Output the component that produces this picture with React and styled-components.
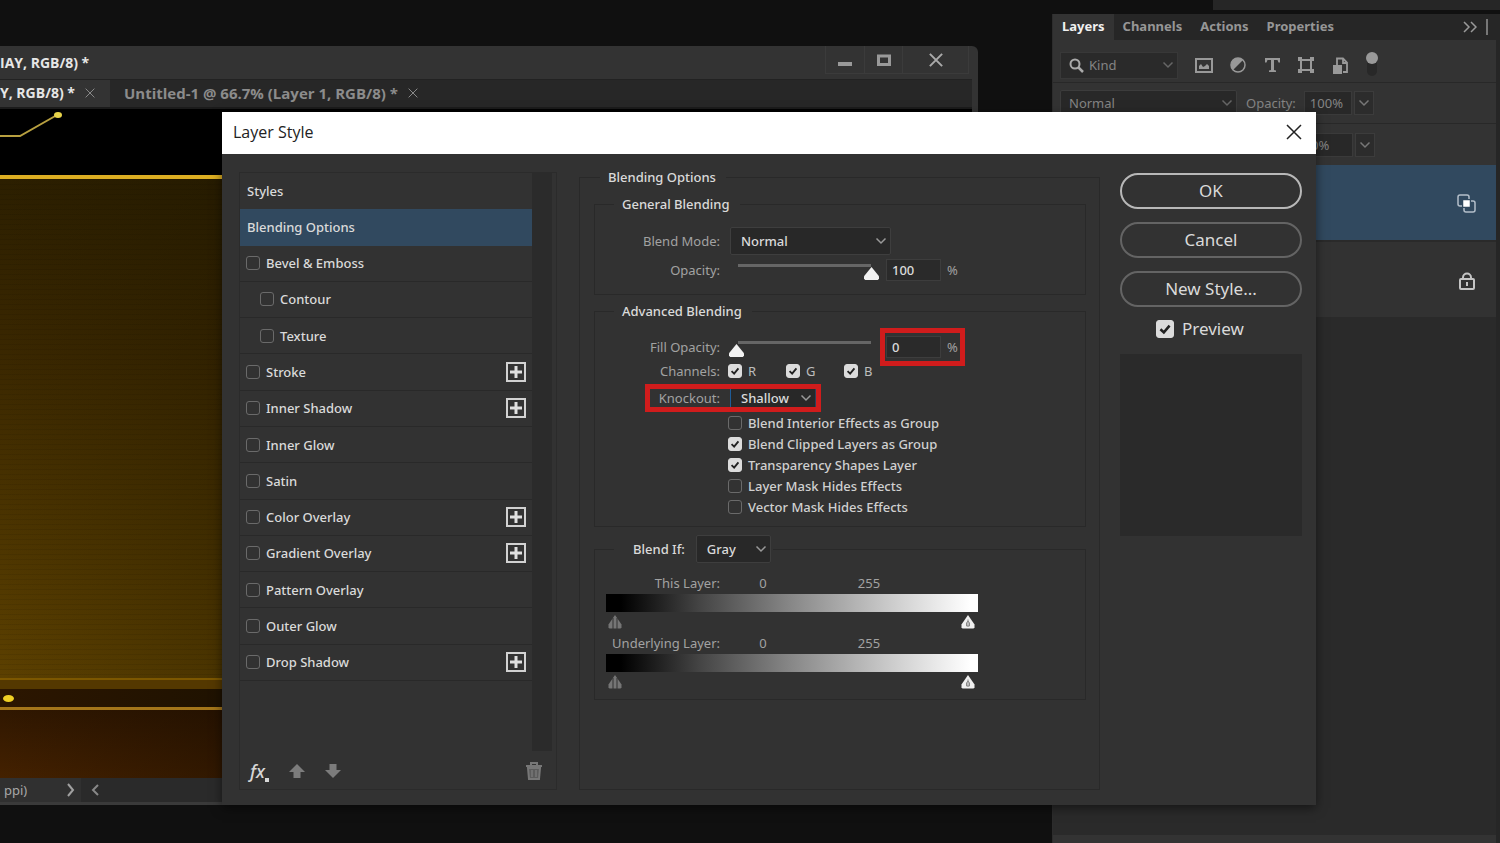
import React from 'react';
import styled, { createGlobalStyle, css } from 'styled-components';

const GlobalStyle = createGlobalStyle`
  *, *::before, *::after { box-sizing: border-box; }
  body {
    margin: 0;
    background: #101010;
    color: #dadada;
    font: 13px/16px "Noto Sans", "Open Sans", sans-serif;
  }
  button, input, select { font: inherit; color: inherit; margin: 0; }
  button { background: none; border: 0; padding: 0; }
`;

const chevron = (color) =>
  `url("data:image/svg+xml,%3Csvg xmlns='http://www.w3.org/2000/svg' width='12' height='8' viewBox='0 0 12 8'%3E%3Cpath d='M1.5 1.5 6 6l4.500-4.500' fill='none' stroke='%23${color}' stroke-width='1.500'/%3E%3C/svg%3E")`;
const CHECK =
  "url(\"data:image/svg+xml,%3Csvg xmlns='http://www.w3.org/2000/svg' viewBox='0 0 14 14'%3E%3Cpath d='M3 7.200 6 10l5-6' fill='none' stroke='%23222' stroke-width='2.200'/%3E%3C/svg%3E\")";

const Desktop = styled.main`
  position: relative;
  display: flex;
  min-height: max(100vh, 820px);
  overflow: hidden;
  background: #101010;
`;

/* Document window */

const Workspace = styled.div`
  flex: 1;
  min-width: 0;
  display: flex;
  padding: 46px 74px 38px 0;
`;

const DocWindow = styled.section`
  flex: 1;
  min-width: 0;
  display: flex;
  flex-direction: column;
  padding-right: 6px;
  border-radius: 0 6px 0 0;
  background: #333;
`;

const DocTitleBar = styled.header`
  display: flex;
  align-items: stretch;
  justify-content: space-between;
  height: 33px;
`;

const DocTitle = styled.h1`
  margin: 0;
  font-family: "Open Sans", sans-serif;
  font-size: 14px;
  line-height: 34px;
  font-weight: 700;
  color: #e6e6e6;
`;

const WindowButtons = styled.div`
  display: flex;
  height: 28px;
  margin-right: 3px;
  border: 1px solid #3b3b3b;
  border-width: 0 1px 1px;
`;

const WindowButton = styled.button`
  display: grid;
  place-items: center;
  width: ${(p) => (p.$wide ? 66 : 38)}px;
  & + & { border-left: 1px solid #3b3b3b; }
`;

const TabStrip = styled.div`
  display: flex;
  height: 30px;
  border-top: 1px solid #222;
  border-bottom: 2px solid #1b1b1b;
  background: #272727;
`;

const DocTab = styled.div`
  display: flex;
  align-items: center;
  gap: 10px;
  padding: 0 15px 2px ${(p) => (p.$active ? 0 : 14)}px;
  background: ${(p) => (p.$active ? '#333' : 'transparent')};
  color: ${(p) => (p.$active ? '#e6e6e6' : '#8c8c8c')};
  font-family: "Open Sans", sans-serif;
  font-weight: 700;
  font-size: ${(p) => (p.$active ? 14 : 15)}px;
  button { display: flex; }
`;

const Canvas = styled.div`
  flex: 1;
  display: flex;
  flex-direction: column;
  background: #000;
`;

const ArtTop = styled.div`
  height: 66px;
  svg { display: block; }
`;

const ArtLine = styled.div`
  height: ${(p) => p.$size}px;
  background: ${(p) => p.$color};
`;

const ArtField = styled.div`
  flex: 1;
  background:
    repeating-linear-gradient(rgba(0, 0, 0, 0.08) 0 1px, transparent 1px 5px),
    linear-gradient(90deg, transparent, rgba(20, 16, 0, 0.25) 222px),
    linear-gradient(#2c1f00, #3a2700 35%, #4e3600 75%, #5c4000);
`;

const ArtBand = styled.div`
  display: flex;
  align-items: center;
  height: 18px;
  padding-left: 3px;
  background: linear-gradient(90deg, #2c1600, #1f1200 222px);
`;

const ArtDot = styled.span`
  width: 11px;
  height: 7px;
  border-radius: 50%;
  background: #f0d024;
`;

const ArtGround = styled.div`
  height: 68px;
  background:
    linear-gradient(90deg, transparent, rgba(20, 10, 0, 0.4) 222px),
    linear-gradient(#301700, #442100);
`;

const StatusBar = styled.footer`
  display: flex;
  align-items: center;
  height: 27px;
  border-bottom: 3px solid #3a3a3a;
  background: #2a2a2a;
  color: #a8a8a8;
`;

const StatusInfo = styled.div`
  display: flex;
  align-items: center;
  justify-content: space-between;
  align-self: stretch;
  width: 81px;
  padding: 0 6px 0 4px;
  background: #303030;
`;

const StatusScroll = styled.button`
  display: flex;
  padding-left: 10px;
`;

/* Layers dock */

const Dock = styled.aside`
  width: 448px;
  display: flex;
  flex-direction: column;
`;

const DockTop = styled.div`
  height: 10px;
  margin-left: 161px;
  background: #262626;
`;

const LayersPanel = styled.section`
  flex: 1;
  display: flex;
  flex-direction: column;
  margin-top: 4px;
  border-left: 1px solid #2c2c2c;
  border-right: 4px solid #262626;
  background: #2a2a2a;
`;

const PanelTabs = styled.nav`
  display: flex;
  align-items: center;
  height: 26px;
  background: #262626;
`;

const PanelTab = styled.button`
  height: 26px;
  padding: 0 9px 2px;
  font-weight: 700;
  color: ${(p) => (p.$active ? '#f0f0f0' : '#969696')};
  background: ${(p) => (p.$active ? '#333' : 'transparent')};
`;

const PanelTabEnd = styled.div`
  display: flex;
  align-items: center;
  gap: 9px;
  margin-left: auto;
  padding-right: 8px;
`;

const PanelRow = styled.div`
  display: flex;
  align-items: center;
  height: ${(p) => p.$size}px;
  padding: ${(p) => (p.$filter ? 8 : 0)}px 8px 0 7px;
  border-bottom: ${(p) => (p.$line ? 1 : 0)}px solid #282828;
  background: #333;
  color: #848484;
`;

const KindBox = styled.label`
  display: flex;
  align-items: center;
  gap: 5px;
  width: 118px;
  height: 27px;
  margin-right: 16px;
  padding-left: 8px;
  border: 1px solid #383838;
  background: #2a2a2a;
`;

const FilterButtons = styled.div`
  display: flex;
  align-items: center;
  gap: 14px;
  button { display: flex; justify-content: center; width: 20px; }
  button:last-child { width: 16px; }
`;

const PanelSelect = styled.select`
  appearance: none;
  width: 177px;
  height: 26px;
  padding: 0 8px;
  margin-right: 9px;
  border: 1px solid #3c3c3c;
  border-radius: 2px;
  background: #282828 ${chevron('666')} no-repeat right 3px center;
  ${(p) => p.$bare && 'flex: 1; min-width: 0; border: 0; padding: 0; margin: 0; background-color: transparent;'}
`;

const PanelValue = styled.input`
  width: 48px;
  height: 24px;
  margin-left: ${(p) => (p.$push ? 245 : 8)}px;
  padding: 0 5px;
  border: 1px solid #3a3a3a;
  background: #282828;
`;

const PanelArrow = styled.button`
  width: 20px;
  height: 24px;
  margin-left: 2px;
  border: 1px solid #3c3c3c;
  background: #2c2c2c ${chevron('777')} no-repeat center;
`;

const LayerItem = styled.div`
  display: flex;
  align-items: center;
  justify-content: flex-end;
  height: 77px;
  padding: 2px 20px 0 0;
  border-bottom: 2px solid #2a2a2a;
  background: ${(p) => (p.$selected ? '#31495f' : '#323232')};
`;

const PanelFooter = styled.div`
  height: 8px;
  margin-top: auto;
  background: #333;
`;

/* Layer Style dialog */

const Dialog = styled.section`
  position: absolute;
  top: 112px;
  left: 222px;
  right: 184px;
  background: #323232;
  box-shadow: 0 3px 10px rgba(0, 0, 0, 0.5);
`;

const DialogTitle = styled.header`
  display: flex;
  align-items: center;
  justify-content: space-between;
  height: 42px;
  padding: 0 14px 2px 11px;
  background: #fff;
  color: #222;
  h2 {
    margin: 0;
    font: 400 16px/20px "Open Sans", sans-serif;
  }
  button { display: flex; }
`;

const DialogBody = styled.div`
  display: flex;
  min-height: 651px;
  padding: 15px 14px 15px 17px;
`;

const StylesPanel = styled.div`
  width: 318px;
  margin: 3px 22px 0 0;
  display: flex;
  flex-direction: column;
  border: 1px solid #2b2b2b;
  font-weight: 500;
`;

const StylesScroll = styled.div`
  flex: 1;
  display: flex;
  justify-content: space-between;
`;

const StyleList = styled.ul`
  flex: 1;
  display: grid;
  grid-auto-rows: 1fr;
  height: 508px;
  margin: 0;
  padding: 0;
  list-style: none;
`;

const ScrollTrack = styled.div`
  width: 20px;
  margin-right: 4px;
  background: #2b2b2b;
`;

const StyleRow = styled.li`
  display: flex;
  align-items: center;
  justify-content: space-between;
  padding: 0 6px 0 ${(p) => (p.$nested ? 20 : 6)}px;
  border-bottom: 1px solid ${(p) => (p.$plain ? 'transparent' : '#292929')};
  background: ${(p) => (p.$selected ? '#31495f' : 'transparent')};
`;

const StyleLink = styled.button`
  padding: 0 1px;
`;

const CheckLabel = styled.label`
  display: inline-flex;
  align-items: center;
  gap: ${(p) => (p.$large ? 8 : 6)}px;
  ${(p) => p.$large && css`
    align-self: flex-start;
    margin: 0 0 3px 36px;
    font-size: 17px;
  `}
`;

const Checkbox = styled.input.attrs({ type: 'checkbox' })`
  appearance: none;
  flex: none;
  width: ${(p) => (p.$large ? 18 : 14)}px;
  height: ${(p) => (p.$large ? 18 : 14)}px;
  border: 1px solid #6a6a6a;
  border-radius: 3px;
  &:checked {
    border-color: #dcdcdc;
    background: #dcdcdc ${CHECK} center / 100% no-repeat;
  }
`;

const AddButton = styled.button`
  display: grid;
  place-items: center;
  width: 20px;
  height: 20px;
  border: 2px solid #d2d2d2;
`;

const StylesFooter = styled.div`
  display: flex;
  align-items: center;
  gap: 20px;
  height: 38px;
  padding: 2px 14px 0 10px;
  color: #808080;
  button { display: flex; }
`;

const FxButton = styled.button`
  align-items: flex-end;
  color: #d6d6d6;
  font-size: 18px;
  line-height: 22px;
  font-style: italic;
`;

const TrashButton = styled.button`
  margin-left: auto;
`;

const Group = styled.fieldset`
  min-width: 0;
  margin: 0 0 8px;
  padding: ${(p) => p.$pad};
  border: 1px solid #292929;
  color: #a2a2a2;
`;

const OptionsGroup = styled(Group)`
  flex: 1;
  margin: 0 20px 0 0;
`;

const Legend = styled.legend`
  display: flex;
  align-items: center;
  gap: 11px;
  margin-left: ${(p) => (p.$outer ? 6 : 19)}px;
  padding: 0 ${(p) => (p.$tight ? 2 : 10)}px 0 ${(p) => (p.$tight ? 19 : 8)}px;
  color: #dadada;
  font-weight: 500;
`;

const FormRow = styled.div`
  position: relative;
  display: grid;
  grid-template-columns: 125px 1fr;
  column-gap: 8px;
  align-items: center;
  height: ${(p) => p.$size}px;
`;

const FieldLabel = styled.label`
  text-align: right;
`;

const Controls = styled.div`
  display: flex;
  align-items: center;
  padding-left: ${(p) => (p.$flush ? 1 : 2)}px;
`;

const Select = styled.select`
  appearance: none;
  width: ${(p) => p.$width}px;
  height: ${(p) => (p.$focus ? 22 : 28)}px;
  padding: 0 10px;
  border: 1px solid #3e3e3e;
  border-radius: 2px;
  background: #282828 ${chevron('999')} no-repeat right 3px center;
  color: #dadada;
  font-weight: 500;
  ${(p) => p.$focus && 'border-color: #29425c; border-left-color: #1f5c98;'}
`;

const Slider = styled.input.attrs({ type: 'range' })`
  appearance: none;
  width: 150px;
  height: 22px;
  margin-right: 7px;
  background: linear-gradient(#666, #666) no-repeat 9px 5px / 133px 3px;
  &::-webkit-slider-runnable-track { height: 22px; background: none; }
  &::-webkit-slider-thumb {
    appearance: none;
    width: 15px;
    height: 13px;
    margin-top: 8px;
    background: #f2f2f2;
    clip-path: polygon(50% 0, 100% 72%, 100% 90%, 92% 100%, 8% 100%, 0 90%, 0 72%);
  }
`;

const NumberGroup = styled.div`
  position: relative;
  display: flex;
  align-items: center;
  gap: 6px;
`;

const NumberField = styled.input`
  width: 55px;
  height: 22px;
  padding: 0 5px;
  border: 1px solid #3d3d3d;
  background: #2a2a2a;
  color: #dadada;
  font-weight: 500;
`;

const Highlight = styled.span`
  position: absolute;
  border: 5px solid #d01c1c;
  pointer-events: none;
  ${(p) => (p.$row ? 'inset: 0 auto 0 50px; width: 176px;' : 'inset: -8px -7px -8px -6px;')}
`;

const Channels = styled.div`
  display: flex;
  color: #bdbdbd;
  label { width: 58px; }
`;

const CheckList = styled.div`
  display: grid;
  grid-auto-rows: 21px;
  padding-left: 133px;
  color: #d0d0d0;
  font-weight: 500;
`;

const RangeBlock = styled.div`
  width: 372px;
  margin-left: 11px;
`;

const RangeHead = styled.div`
  display: grid;
  grid-template-columns: 114px 86px 126px;
  align-items: center;
  height: 22px;
  text-align: center;
  span:first-child { text-align: right; }
`;

const RangeBar = styled.div`
  height: 18px;
  background: linear-gradient(90deg, #000 4%, #444 25%, #888 50%, #d4d4d4 80%, #fff 98%);
`;

const RangeMarks = styled.div`
  display: flex;
  justify-content: space-between;
  height: 20px;
  padding: 3px 3px 0 2px;
`;

const Actions = styled.div`
  width: 182px;
  margin-top: 4px;
  display: flex;
  flex-direction: column;
  align-items: center;
  gap: 13px;
`;

const PillButton = styled.button`
  width: 100%;
  height: 36px;
  border: 2px solid ${(p) => (p.$primary ? '#b8b8b8' : '#646464')};
  border-radius: 18px;
  font-size: 17px;
  color: #dadada;
`;

const PreviewBox = styled.div`
  align-self: stretch;
  height: 182px;
  background: #2a2a2a;
`;

const Cross = ({ size, color, weight = 1 }) => (
  <svg width={size} height={size} viewBox="0 0 16 16" fill="none" stroke={color} strokeWidth={(weight * 16) / size}>
    <path d="M1 1 15 15M15 1 1 15" />
  </svg>
);

const Mark = ({ light }) => (
  <svg width="14" height="14" viewBox="0 0 14 14">
    <path d="M7 0 13.500 9.500v3l-1 1h-11l-1-1v-3z" fill={light ? '#f0f0f0' : '#757575'} />
    {light ? (
      <path d="M7 4.500v7M5.500 11V8L7 6l1.500 2v3z" stroke="#888" fill="none" />
    ) : (
      <path d="M5 3v11M9 3v11" stroke="#333" />
    )}
  </svg>
);

const Arrow = ({ down }) => (
  <svg width="16" height="16" viewBox="0 0 16 16" fill="#7c7c7c">
    <path d={down ? 'M4.500 1h7v6H16l-8 8-8-8h4.500z' : 'M8 1l8 8h-4.500v6h-7V9H0z'} />
  </svg>
);

const STYLES = [
  { name: 'Bevel & Emboss' },
  { name: 'Contour', nested: true },
  { name: 'Texture', nested: true },
  { name: 'Stroke', add: true },
  { name: 'Inner Shadow', add: true },
  { name: 'Inner Glow' },
  { name: 'Satin' },
  { name: 'Color Overlay', add: true },
  { name: 'Gradient Overlay', add: true },
  { name: 'Pattern Overlay' },
  { name: 'Outer Glow' },
  { name: 'Drop Shadow', add: true },
];

const ADVANCED = [
  ['Blend Interior Effects as Group', false],
  ['Blend Clipped Layers as Group', true],
  ['Transparency Shapes Layer', true],
  ['Layer Mask Hides Effects', false],
  ['Vector Mask Hides Effects', false],
];

const Check = ({ label, checked = false, large }) => (
  <CheckLabel $large={large}>
    <Checkbox defaultChecked={checked} $large={large} />
    {label}
  </CheckLabel>
);

const BlendRange = ({ label }) => (
  <RangeBlock>
    <RangeHead>
      <span>{label}</span>
      <span>0</span>
      <span>255</span>
    </RangeHead>
    <RangeBar />
    <RangeMarks>
      <Mark />
      <Mark light />
    </RangeMarks>
  </RangeBlock>
);

const DocumentWindow = () => (
  <DocWindow>
    <DocTitleBar>
      <DocTitle>IAY, RGB/8) *</DocTitle>
      <WindowButtons>
        <WindowButton aria-label="Minimize">
          <svg width="14" height="14"><path d="M0 9h14v4H0z" fill="#999" /></svg>
        </WindowButton>
        <WindowButton aria-label="Maximize">
          <svg width="14" height="12"><path d="M1.500 2h11v8.500h-11z" fill="none" stroke="#999" strokeWidth="3" /></svg>
        </WindowButton>
        <WindowButton $wide aria-label="Close window">
          <Cross size={14} color="#aaa" weight={2} />
        </WindowButton>
      </WindowButtons>
    </DocTitleBar>
    <TabStrip>
      <DocTab $active>
        Y, RGB/8) *
        <button aria-label="Close tab"><Cross size={10} color="#888" /></button>
      </DocTab>
      <DocTab>
        Untitled-1 @ 66.7% (Layer 1, RGB/8) *
        <button aria-label="Close tab"><Cross size={10} color="#888" /></button>
      </DocTab>
    </TabStrip>
    <Canvas>
      <ArtTop>
        <svg width="222" height="66">
          <path d="M0 27h20L57 6" fill="none" stroke="#b8a040" strokeWidth="2" />
          <ellipse cx="58" cy="6" rx="4" ry="3" fill="#e8d44a" />
        </svg>
      </ArtTop>
      <ArtLine $size={4} $color="#dcae22" />
      <ArtField />
      <ArtLine $size={2} $color="#7c5700" />
      <ArtLine $size={9} $color="#543800" />
      <ArtBand><ArtDot /></ArtBand>
      <ArtLine $size={3} $color="#a4761a" />
      <ArtGround />
    </Canvas>
    <StatusBar>
      <StatusInfo>
        ppi)
        <svg width="8" height="14" fill="none" stroke="#a0a0a0" strokeWidth="2"><path d="M1 1l5 6-5 6" /></svg>
      </StatusInfo>
      <StatusScroll aria-label="Scroll left">
        <svg width="8" height="12" fill="none" stroke="#888" strokeWidth="2"><path d="M7 1 2 6l5 5" /></svg>
      </StatusScroll>
    </StatusBar>
  </DocWindow>
);

const LayersDock = () => (
  <Dock>
    <DockTop />
    <LayersPanel>
      <PanelTabs>
        <PanelTab $active>Layers</PanelTab>
        <PanelTab>Channels</PanelTab>
        <PanelTab>Actions</PanelTab>
        <PanelTab>Properties</PanelTab>
        <PanelTabEnd>
          <svg width="14" height="12" fill="none" stroke="#999" strokeWidth="1.500"><path d="M1 1l5 5-5 5M8 1l5 5-5 5" /></svg>
          <svg width="2" height="16"><path d="M0 0h2v16H0z" fill="#777" /></svg>
        </PanelTabEnd>
      </PanelTabs>
      <PanelRow $size={43} $line $filter>
        <KindBox>
          <svg width="15" height="15" fill="none" stroke="#aaa" strokeWidth="2">
            <circle cx="6" cy="6" r="4.500" />
            <path d="M9 9l5 5" strokeWidth="2.500" />
          </svg>
          <PanelSelect $bare aria-label="Filter kind"><option>Kind</option></PanelSelect>
        </KindBox>
        <FilterButtons>
          <button aria-label="Filter pixel layers">
            <svg width="18" height="15">
              <path d="M1 1h16v13H1z" fill="none" stroke="#999" strokeWidth="2" />
              <path d="M4 11V8l2-2 2 3 2-1 2-2 2 2v3z" fill="#999" />
            </svg>
          </button>
          <button aria-label="Filter adjustment layers">
            <svg width="16" height="16">
              <circle cx="8" cy="8" r="7" fill="none" stroke="#999" strokeWidth="1.500" />
              <path d="M13 3a7 7 0 0 0-10 10z" fill="#999" />
            </svg>
          </button>
          <button aria-label="Filter type layers">
            <svg width="15" height="14" fill="#999">
              <path d="M0 0h15v4.500h-1.500L12.500 2H9v10l2 .6V14H4v-1.400L6 12V2H2.500l-1 2.500H0z" />
            </svg>
          </button>
          <button aria-label="Filter shape layers">
            <svg width="16" height="16" fill="#999">
              <path d="M3 3h10v10H3z" fill="none" stroke="#999" strokeWidth="2" />
              <path d="M0 0h4v4H0zM12 0h4v4h-4zM0 12h4v4H0zM12 12h4v4h-4z" />
            </svg>
          </button>
          <button aria-label="Filter smart objects">
            <svg width="15" height="17">
              <path d="M4 8V1.500h6L14 5.500V15h-4M10 1.500V6h4" fill="none" stroke="#999" strokeWidth="1.800" />
              <path d="M0 8h9v9H0z" fill="#999" />
            </svg>
          </button>
          <button aria-label="Toggle filtering">
            <svg width="12" height="26">
              <rect x="1" y="2" width="10" height="22" rx="5" fill="#282828" />
              <circle cx="6" cy="6" r="6" fill="#999" />
            </svg>
          </button>
        </FilterButtons>
      </PanelRow>
      <PanelRow $size={41} $line>
        <PanelSelect aria-label="Layer blend mode"><option>Normal</option></PanelSelect>
        <label htmlFor="layer-opacity">Opacity:</label>
        <PanelValue id="layer-opacity" defaultValue="100%" />
        <PanelArrow aria-label="Opacity options" />
      </PanelRow>
      <PanelRow $size={41}>
        <PanelValue $push aria-label="Layer fill" defaultValue="0%" />
        <PanelArrow aria-label="Fill options" />
      </PanelRow>
      <LayerItem $selected>
        <svg width="19" height="19" fill="none" stroke="#b4bfca" strokeWidth="1.500">
          <path d="M12 5V3a2 2 0 0 0-2-2H3a2 2 0 0 0-2 2v7a2 2 0 0 0 2 2h2" />
          <path d="M14 7h2a2 2 0 0 1 2 2v7a2 2 0 0 1-2 2H9a2 2 0 0 1-2-2v-2" />
          <path d="M7 7h5v5H7z" fill="#fff" stroke="#fff" />
        </svg>
      </LayerItem>
      <LayerItem>
        <svg width="18" height="18" fill="none" stroke="#c4c4c4" strokeWidth="2">
          <rect x="2" y="7" width="14" height="10" rx="1" />
          <path d="M5 7V5.500a4 4 0 0 1 8 0V7M9 10v4" />
        </svg>
      </LayerItem>
      <PanelFooter />
    </LayersPanel>
  </Dock>
);

const StylesList = () => (
  <StylesPanel>
    <StylesScroll>
      <StyleList>
        <StyleRow $plain><StyleLink>Styles</StyleLink></StyleRow>
        <StyleRow $plain $selected><StyleLink>Blending Options</StyleLink></StyleRow>
        {STYLES.map((s) => (
          <StyleRow key={s.name} $nested={s.nested}>
            <Check label={s.name} />
            {s.add && (
              <AddButton aria-label={`Add ${s.name}`}>
                <svg width="12" height="12"><path d="M6 0v12M0 6h12" stroke="#e0e0e0" strokeWidth="3" /></svg>
              </AddButton>
            )}
          </StyleRow>
        ))}
      </StyleList>
      <ScrollTrack />
    </StylesScroll>
    <StylesFooter>
      <FxButton aria-label="Effects menu">
        fx
        <svg width="4" height="4"><path d="M0 0h4v4H0z" fill="#d6d6d6" /></svg>
      </FxButton>
      <button aria-label="Move effect up"><Arrow /></button>
      <button aria-label="Move effect down"><Arrow down /></button>
      <TrashButton aria-label="Delete effect">
        <svg width="16" height="18" fill="none" stroke="#777" strokeWidth="2">
          <path d="M0 4h16M5 3V1h6v2" />
          <path d="M2 6h12l-1 11H3z" fill="#5c5c5c" />
          <path d="M6 8v7M10 8v7" strokeWidth="1.500" />
        </svg>
      </TrashButton>
    </StylesFooter>
  </StylesPanel>
);

const BlendingOptions = () => (
  <OptionsGroup $pad="11px 13px 0 14px">
    <Legend $outer>Blending Options</Legend>
    <Group $pad="15px 0 9px">
      <Legend>General Blending</Legend>
      <FormRow $size={28}>
        <FieldLabel htmlFor="blend-mode">Blend Mode:</FieldLabel>
        <Controls>
          <Select id="blend-mode" $width={161}><option>Normal</option></Select>
        </Controls>
      </FormRow>
      <FormRow $size={30}>
        <FieldLabel htmlFor="opacity">Opacity:</FieldLabel>
        <Controls $flush>
          <Slider aria-label="Opacity slider" defaultValue={100} />
          <NumberGroup>
            <NumberField id="opacity" defaultValue="100" />
            %
          </NumberGroup>
        </Controls>
      </FormRow>
    </Group>
    <Group $pad="17px 0 9px">
      <Legend>Advanced Blending</Legend>
      <FormRow $size={22}>
        <FieldLabel htmlFor="fill-opacity">Fill Opacity:</FieldLabel>
        <Controls $flush>
          <Slider aria-label="Fill opacity slider" defaultValue={0} />
          <NumberGroup>
            <NumberField id="fill-opacity" defaultValue="0" />
            %
            <Highlight />
          </NumberGroup>
        </Controls>
      </FormRow>
      <FormRow $size={26}>
        <FieldLabel as="span">Channels:</FieldLabel>
        <Channels>
          <Check label="R" checked />
          <Check label="G" checked />
          <Check label="B" checked />
        </Channels>
      </FormRow>
      <FormRow $size={28}>
        <FieldLabel htmlFor="knockout">Knockout:</FieldLabel>
        <Controls>
          <Select id="knockout" $width={86} $focus><option>Shallow</option></Select>
        </Controls>
        <Highlight $row />
      </FormRow>
      <CheckList>
        {ADVANCED.map(([label, checked]) => (
          <Check key={label} label={label} checked={checked} />
        ))}
      </CheckList>
    </Group>
    <Group $pad="9px 0 7px">
      <Legend $tight>
        <label htmlFor="blend-if">Blend If:</label>
        <Select id="blend-if" $width={75}><option>Gray</option></Select>
      </Legend>
      <BlendRange label="This Layer:" />
      <BlendRange label="Underlying Layer:" />
    </Group>
  </OptionsGroup>
);

export default function App() {
  return (
    <>
      <GlobalStyle />
      <Desktop>
        <Workspace>
          <DocumentWindow />
        </Workspace>
        <LayersDock />
        <Dialog role="dialog" aria-labelledby="dialog-title">
          <DialogTitle>
            <h2 id="dialog-title">Layer Style</h2>
            <button aria-label="Close"><Cross size={16} color="#222" weight={1.5} /></button>
          </DialogTitle>
          <DialogBody>
            <StylesList />
            <BlendingOptions />
            <Actions>
              <PillButton $primary>OK</PillButton>
              <PillButton>Cancel</PillButton>
              <PillButton>New Style...</PillButton>
              <Check label="Preview" checked large />
              <PreviewBox />
            </Actions>
          </DialogBody>
        </Dialog>
      </Desktop>
    </>
  );
}
